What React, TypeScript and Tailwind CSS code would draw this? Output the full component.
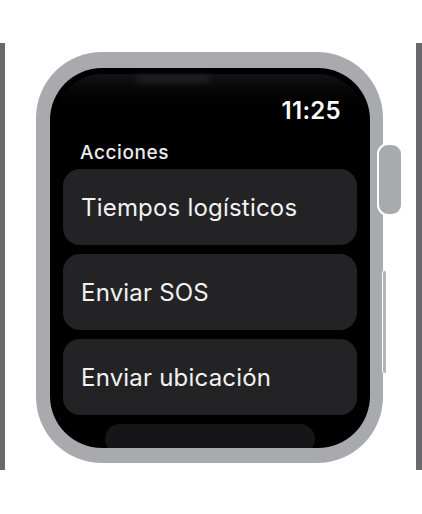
import React from 'react';

const acciones = ['Tiempos logísticos', 'Enviar SOS', 'Enviar ubicación'];

function Watch() {
  return (
    <div className="relative mt-[9px] ml-[31px] w-[347px] h-[411px] rounded-[66px] bg-[#a9aaae] p-[14px] pt-[16px] pb-[15px] pr-[13px]">
      {/* corona digital */}
      <div className="absolute left-[341px] top-[91px] w-[26px] h-[73px] rounded-[11px] bg-[#a9aaae] border-2 border-white" />
      {/* botón lateral */}
      <div className="absolute left-[346px] top-[218px] w-[5px] h-[104px] rounded-full bg-[#b4b4b8] border border-white" />

      <div className="relative h-full w-full overflow-hidden rounded-[52px] bg-black">
        <div className="absolute left-[6px] right-[6px] top-[6px] h-[48px] rounded-t-[46px] bg-gradient-to-b from-[#131315] to-black" />
        <div className="absolute left-[86px] top-[8px] h-[6px] w-[74px] rounded-full bg-[#222428] blur-[3px]" />

        <div className="relative flex flex-col px-[13px]">
          <div className="flex justify-end pr-[16px] pt-[28px]">
            <span className="text-[24px] leading-[29px] font-semibold text-white tracking-[0.3px]">11:25</span>
          </div>
          <div className="pl-[17px] mt-[17px] text-[19px] leading-[22px] font-medium text-[#ececec] tracking-[0.6px]">
            Acciones
          </div>
          <div className="mt-[5px] flex flex-col gap-[9px]">
            {acciones.map((a) => (
              <div key={a} className="h-[76px] rounded-[17px] bg-[#232325] flex items-center pl-[18px]">
                <span className="text-[24px] leading-[29px] text-[#f2f2f2] tracking-[0.2px]">{a}</span>
              </div>
            ))}
            <div className="mx-[42px] h-[30px] rounded-[16px] bg-[#161618]" />
          </div>
        </div>
      </div>
    </div>
  );
}

export default function App() {
  return (
    <div className="w-[422px] h-[514px] bg-white pt-[43px]" style={{ fontFamily: 'Inter, "Noto Sans", sans-serif' }}>
      <div className="flex h-[427px]">
        <div className="w-[5px] h-full bg-[#6a6a6c]" />
        <div className="flex-1">
          <Watch />
        </div>
        <div className="w-[6px] h-full bg-[#6a6a6c]" />
      </div>
    </div>
  );
}
